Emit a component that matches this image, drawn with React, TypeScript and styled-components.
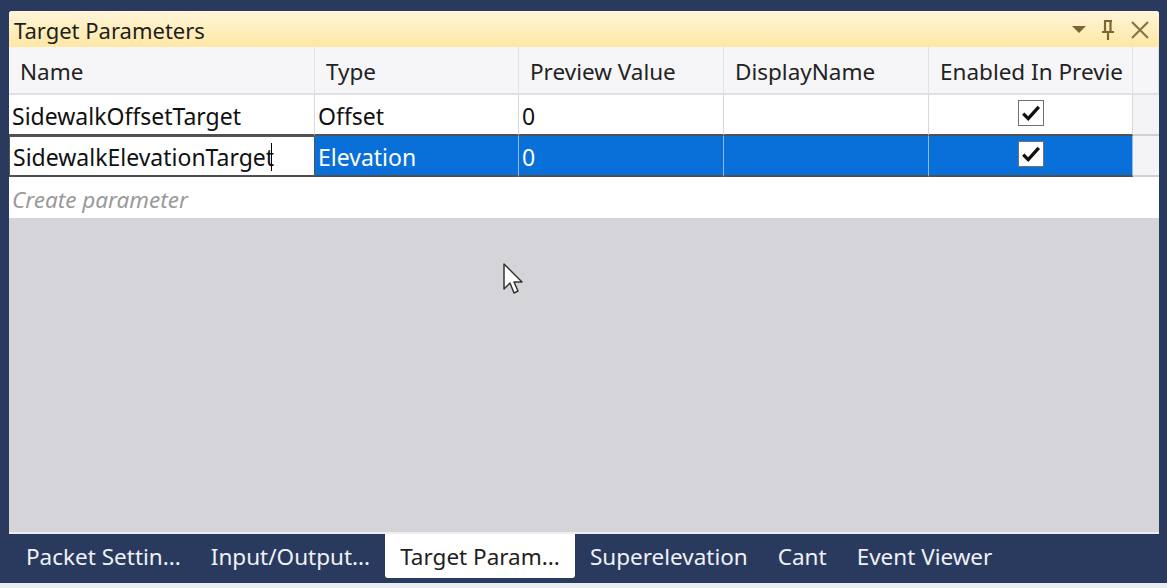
import React from "react"
import styled, { createGlobalStyle } from "styled-components"

const GlobalStyle = createGlobalStyle`
    html, body {
        margin: 0;
        padding: 0;
        background: #2a3a5f;
    }
    body {
        font-family: "Noto Sans", "Open Sans", sans-serif;
    }
`

const Page = styled.div`
    width: 1167px;
    height: 588px;
    box-sizing: border-box;
    padding: 11px 8px 0 9px;
    display: flex;
    flex-direction: column;
    background: #2a3a5f;
    border-bottom: 5px solid #e9ecf2;
    overflow: hidden;
`

const Panel = styled.div`
    display: flex;
    flex-direction: column;
    height: 521px;
    background: #d5d4d9;
    border-radius: 3px 3px 0 0;
    overflow: hidden;
    border-bottom: 2px solid #eceef3;
`

const TitleBar = styled.div`
    height: 36px;
    display: flex;
    align-items: center;
    justify-content: space-between;
    padding: 1px 8px 0 5px;
    box-sizing: border-box;
    background: linear-gradient(#fff6da, #fde7a4);
    font-size: 22px;
    color: #1e1e1e;
`

const TitleButtons = styled.div`
    display: flex;
    align-items: center;
    gap: 14px;
`

const Grid = styled.div`
    display: grid;
    grid-template-columns: 306px 204px 205px 205px 204px 1fr;
    background: #ffffff;
`

const HeaderCell = styled.div`
    height: 48px;
    display: flex;
    align-items: center;
    padding: 3px 0 0 11px;
    background: #f6f6f8;
    border-right: 1px solid #e2e2e6;
    border-bottom: 2px solid #e0e0e4;
    box-sizing: border-box;
    font-size: 22.5px;
    color: #222;
    white-space: nowrap;
    overflow: hidden;
`

const Cell = styled.div<{ $selected?: boolean; $center?: boolean; $editing?: boolean }>`
    height: 41px;
    display: flex;
    align-items: center;
    justify-content: ${p => (p.$center ? "center" : "flex-start")};
    padding-left: ${p => (p.$center ? "0" : "3px")};
    padding-top: 2px;
    box-sizing: border-box;
    font-size: 23px;
    white-space: nowrap;
    overflow: hidden;
    color: ${p => (p.$selected ? "#ffffff" : "#111")};
    background: ${p => (p.$selected ? "#0870d8" : "#ffffff")};
    border-right: 1px solid ${p => (p.$selected ? "#8fb9ea" : "#d8d8dc")};
    border-bottom: 2px solid #505050;
    ${p => p.$editing && "border: 1px solid #555; border-bottom: 2px solid #505050;"}
`

const FillCell = styled.div`
    height: 41px;
    background: #f4f4f6;
    border-bottom: 2px solid #d0d0d4;
    box-sizing: border-box;
`

const Caret = styled.span`
    display: inline-block;
    width: 1px;
    height: 28px;
    background: #000;
    margin-left: -3px;
`

const CheckBox = styled.div`
    width: 26px;
    height: 26px;
    box-sizing: border-box;
    border: 1px solid #707070;
    background: #fff;
    display: flex;
    align-items: center;
    justify-content: center;
    margin-top: -6px;
`

const NewRow = styled.div`
    height: 41px;
    display: flex;
    align-items: center;
    padding: 4px 0 0 3px;
    box-sizing: border-box;
    background: #ffffff;
    font-size: 22.5px;
    font-style: italic;
    color: #9a9a9a;
`

const Body = styled.div`
    flex: 1;
    position: relative;
    background: #d5d4d9;
`

const Cursor = styled.svg`
    position: absolute;
    left: 494px;
    top: 45px;
`

const TabBar = styled.div`
    display: flex;
    align-items: flex-start;
    padding-left: 2px;
`

const Tab = styled.div<{ $active?: boolean }>`
    height: 44px;
    display: flex;
    align-items: center;
    padding: 0 15px;
    font-size: 22.5px;
    color: ${p => (p.$active ? "#1e1e1e" : "#eef1f7")};
    background: ${p => (p.$active ? "#ffffff" : "transparent")};
    border-radius: 0 0 3px 3px;
    white-space: nowrap;
`

const Check = () => (
    <svg width="20" height="18" viewBox="0 0 18 16">
        <path d="M2 8.5 L6.5 13 L16 2.5" fill="none" stroke="#111" strokeWidth="3" />
    </svg>
)

const columns = ["Name", "Type", "Preview Value", "DisplayName", "Enabled In Previe"]

const rows = [
    { name: "SidewalkOffsetTarget", type: "Offset", value: "0", display: "", selected: false },
    { name: "SidewalkElevationTarget", type: "Elevation", value: "0", display: "", selected: true },
]

const tabs = ["Packet Settin...", "Input/Output...", "Target Param...", "Superelevation", "Cant", "Event Viewer"]

export default function App() {
    return <>
        <GlobalStyle />
        <Page>
            <Panel>
                <TitleBar>
                    Target Parameters
                    <TitleButtons>
                        <svg width="16" height="10" viewBox="0 0 16 10">
                            <path d="M1 1 L15 1 L8 8 Z" fill="#7a6630" />
                        </svg>
                        <svg width="14" height="22" viewBox="0 0 14 22">
                            <path d="M3 2 H11 M4 2 V13 M9.5 2 V13 M1 13 H13 M7 13 V21" fill="none" stroke="#7a6630" strokeWidth="2.2" />
                        </svg>
                        <svg width="22" height="22" viewBox="0 0 22 22">
                            <path d="M3 3 L19 19 M19 3 L3 19" fill="none" stroke="#857548" strokeWidth="2.2" />
                        </svg>
                    </TitleButtons>
                </TitleBar>
                <Grid>
                    {columns.map(c => <HeaderCell key={c}>{c}</HeaderCell>)}
                    <HeaderCell />
                    {rows.map(r => <React.Fragment key={r.name}>
                        <Cell $editing={r.selected}>
                            {r.name}{r.selected && <Caret />}
                        </Cell>
                        <Cell $selected={r.selected}>{r.type}</Cell>
                        <Cell $selected={r.selected}>{r.value}</Cell>
                        <Cell $selected={r.selected}>{r.display}</Cell>
                        <Cell $selected={r.selected} $center>
                            <CheckBox><Check /></CheckBox>
                        </Cell>
                        <FillCell />
                    </React.Fragment>)}
                </Grid>
                <NewRow>Create parameter</NewRow>
                <Body>
                    <Cursor width="22" height="34" viewBox="0 0 22 34">
                        <path d="M1 1 L1 26 L7 20 L11 30 L15 28 L11 19 L19 19 Z" fill="#fff" stroke="#333" strokeWidth="1.5" strokeLinejoin="round" />
                    </Cursor>
                </Body>
            </Panel>
            <TabBar>
                {tabs.map(t => <Tab key={t} $active={t === "Target Param..."}>{t}</Tab>)}
            </TabBar>
        </Page>
    </>
}
